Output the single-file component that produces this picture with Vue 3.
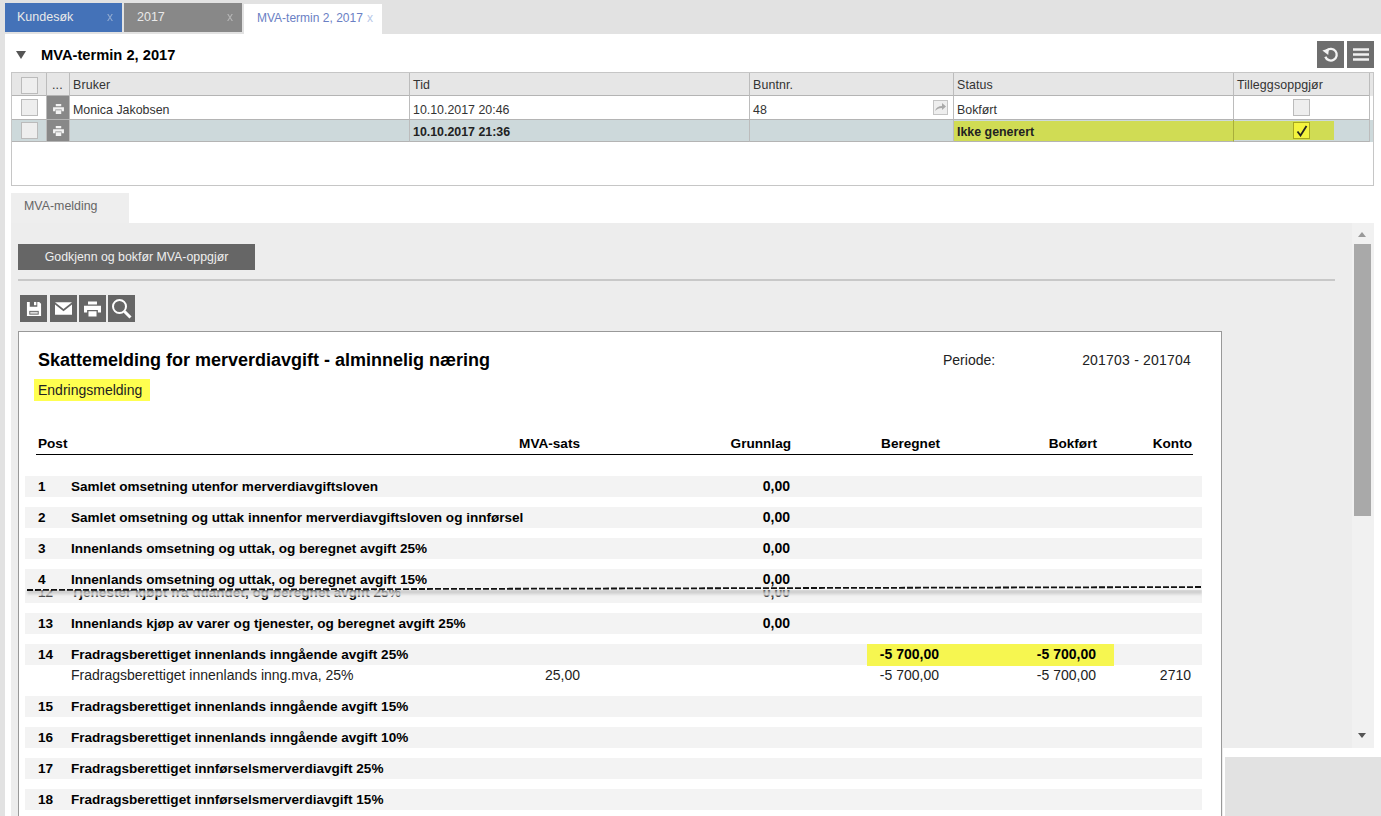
<script setup>
const tabs = [
  { label: 'Kundesøk', cls: 'blue' },
  { label: '2017', cls: 'grey' },
  { label: 'MVA-termin 2, 2017', cls: 'active' }
]
const rowsA = [
  { no: '1', name: 'Samlet omsetning utenfor merverdiavgiftsloven', base: '0,00' },
  { no: '2', name: 'Samlet omsetning og uttak innenfor merverdiavgiftsloven og innførsel', base: '0,00' },
  { no: '3', name: 'Innenlands omsetning og uttak, og beregnet avgift 25%', base: '0,00' },
  { no: '4', name: 'Innenlands omsetning og uttak, og beregnet avgift 15%', base: '0,00' }
]
const rowsC = [
  { no: '15', name: 'Fradragsberettiget innenlands inngående avgift 15%' },
  { no: '16', name: 'Fradragsberettiget innenlands inngående avgift 10%' },
  { no: '17', name: 'Fradragsberettiget innførselsmerverdiavgift 25%' },
  { no: '18', name: 'Fradragsberettiget innførselsmerverdiavgift 15%' }
]
</script>

<template>
  <div class="app">
    <div class="tabbar">
      <div v-for="t in tabs" :key="t.label" class="tab" :class="t.cls">
        <span class="tab-label">{{ t.label }}</span>
        <span class="tab-x">x</span>
      </div>
    </div>

    <div class="main">
      <div class="head">
        <span class="caret"></span>
        <h1 class="title">MVA-termin 2, 2017</h1>
        <div class="head-actions">
          <button class="icon-btn">
            <svg width="19" height="19" viewBox="0 0 21 21"><path d="M6.200 6.200A6.500 6.500 0 1 1 4.800 13" fill="none" stroke="#f4f4f4" stroke-width="2.600"/><path d="M1.500 6 8.800 3.800 8 11Z" fill="#f4f4f4"/></svg>
          </button>
          <button class="icon-btn">
            <svg width="16" height="13" viewBox="0 0 16 13"><path d="M0 1.500h16M0 6.500h16M0 11.500h16" stroke="#f0f0f0" stroke-width="2.600"/></svg>
          </button>
        </div>
      </div>

      <div class="grid-box">
        <div class="g-row g-head">
          <div class="c c1"><span class="cb"></span></div>
          <div class="c c2">...</div>
          <div class="c">Bruker</div>
          <div class="c">Tid</div>
          <div class="c">Buntnr.</div>
          <div class="c">Status</div>
          <div class="c">Tilleggsoppgjør</div>
        </div>
        <div class="g-row g-one">
          <div class="c c1"><span class="cb"></span></div>
          <div class="c c2 pr">
            <svg width="11" height="10" viewBox="0 0 12 11"><path d="M3 0h6v2.500H3zM0 3.500h12V8H9.500V6h-7v2H0zM3 7h6v4H3z" fill="#f2f2f2"/></svg>
          </div>
          <div class="c">Monica Jakobsen</div>
          <div class="c">10.10.2017 20:46</div>
          <div class="c bunt">48
            <span class="go">
              <svg width="11" height="8" viewBox="0 0 11 8"><path d="M0 8C1 4.500 3.500 3 7 3V0l4 3.500L7 7V5C4 5 2 6 0 8Z" fill="#aaa"/></svg>
            </span>
          </div>
          <div class="c">Bokført</div>
          <div class="c center"><span class="cb"></span></div>
        </div>
        <div class="g-row g-two">
          <div class="c c1"><span class="cb"></span></div>
          <div class="c c2 pr">
            <svg width="11" height="10" viewBox="0 0 12 11"><path d="M3 0h6v2.500H3zM0 3.500h12V8H9.500V6h-7v2H0zM3 7h6v4H3z" fill="#f2f2f2"/></svg>
          </div>
          <div class="c"></div>
          <div class="c">10.10.2017 21:36</div>
          <div class="c"></div>
          <div class="c st-hl">Ikke generert</div>
          <div class="c center add-hl">
            <span class="cb on">
              <svg width="12" height="12" viewBox="0 0 12 12"><path d="M1.500 6.500 4.500 10.500 10.500 1" fill="none" stroke="#222" stroke-width="1.800"/></svg>
            </span>
          </div>
        </div>
      </div>

      <div class="subtab">MVA-melding</div>

      <div class="panel">
        <button class="approve">Godkjenn og bokfør MVA-oppgjør</button>
        <div class="rule"></div>
        <div class="tools">
          <button class="tool">
            <svg width="16" height="16" viewBox="0 0 17 17"><path d="M1 1h3v5h8V1h2l2 2v13H1z" fill="#fff"/><path d="M8.500 1H11v3.500H8.500z" fill="#fff"/><path d="M3.500 10.500h10V14.500h-10z" fill="#666"/><path d="M4.500 11.500h8v2h-8z" fill="#ddd"/></svg>
          </button>
          <button class="tool mail">
            <svg width="17" height="13" viewBox="0 0 19 14"><path d="M0 0h19L9.500 7.500Z" fill="#fff"/><path d="M0 2.500V14h19V2.500L9.500 10Z" fill="#fff"/></svg>
          </button>
          <button class="tool">
            <svg width="17" height="16" viewBox="0 0 19 17"><path d="M4.500 0h10v3.500h-10zM0 5h19v7.500h-3.500V9.500h-12v3H0zM5 11h9v6H5z" fill="#fff"/></svg>
          </button>
          <button class="tool">
            <svg width="21" height="21" viewBox="0 0 21 21"><circle cx="8.500" cy="8.500" r="6.500" fill="none" stroke="#fff" stroke-width="2"/><path d="M13.500 13.500 19.500 19.500" stroke="#fff" stroke-width="3"/></svg>
          </button>
        </div>

        <div class="paper">
          <div class="paper-head">
            <h2 class="doc-title">Skattemelding for merverdiavgift - alminnelig næring</h2>
            <span class="period-l">Periode:</span>
            <span class="period-v">201703 - 201704</span>
          </div>
          <div class="change">Endringsmelding</div>

          <div class="cols colhead">
            <span>Post</span><span></span>
            <span class="r">MVA-sats</span>
            <span class="r">Grunnlag</span>
            <span class="r">Beregnet</span>
            <span class="r">Bokført</span>
            <span class="r">Konto</span>
          </div>

          <div class="rows">
            <div v-for="r in rowsA" :key="r.no" class="cols band">
              <span>{{ r.no }}</span><span class="nm">{{ r.name }}</span><span></span>
              <span class="r adj">{{ r.base }}</span>
            </div>

            <div class="tear">
              <div class="cols band torn">
                <span>12</span><span class="nm">Tjenester kjøpt fra utlandet, og beregnet avgift 25%</span><span></span>
                <span class="r adj">0,00</span>
              </div>
              <div class="tear-shadow"></div>
            </div>

            <div class="cols band">
              <span>13</span><span class="nm">Innenlands kjøp av varer og tjenester, og beregnet avgift 25%</span><span></span>
              <span class="r adj">0,00</span>
            </div>
            <div class="cols band marked">
              <span class="mark"></span>
              <span>14</span><span class="nm">Fradragsberettiget innenlands inngående avgift 25%</span><span></span><span></span>
              <span class="r adj">-5 700,00</span>
              <span class="r adj">-5 700,00</span>
            </div>
            <div class="cols detail">
              <span></span><span class="nm">Fradragsberettiget innenlands inng.mva, 25%</span>
              <span class="r">25,00</span><span></span>
              <span class="r adj">-5 700,00</span>
              <span class="r adj">-5 700,00</span>
              <span class="r adj">2710</span>
            </div>
            <div v-for="r in rowsC" :key="r.no" class="cols band after-detail">
              <span>{{ r.no }}</span><span class="nm">{{ r.name }}</span>
            </div>
          </div>

          <svg class="tear-line" width="1176" height="5" viewBox="0 0 1176 5">
            <path d="M0 4 L1176 1" stroke="#111" stroke-width="1.800" stroke-dasharray="6 2" fill="none"/>
          </svg>
        </div>

        <div class="scrollbar">
          <span class="arr up"></span>
          <span class="thumb"></span>
          <span class="arr down"></span>
        </div>
      </div>
    </div>

    <div class="corner"><div class="corner-fill"></div></div>
  </div>
</template>

<style>
html, body { margin: 0; overflow: hidden; }
</style>

<style scoped>
.app {
  position: relative;
  width: 1381px;
  height: 816px;
  overflow: hidden;
  display: flex;
  flex-direction: column;
  background: #e2e2e2;
  font-family: "Liberation Sans", Arial, sans-serif;
  font-size: 12.400px;
  color: #333;
}
.tabbar { height: 34px; flex: none; display: flex; align-items: flex-start; padding: 3px 0 0 5px; gap: 2px; box-sizing: border-box; }
.tab { height: 29px; width: 117px; box-sizing: border-box; display: flex; justify-content: space-between; align-items: center; padding: 0 9px 2px 12px; color: #e9e9e9; font-size: 12.500px; }
.tab-x { font-size: 12px; opacity: .45; color: #eee; }
.blue { background: #4472b8; }
.grey { background: #888; width: 118px; padding-left: 13px; }
.active { background: #fff; width: 138px; height: 30px; margin-top: 1px; color: #6a80c4; padding: 0 9px 3px 13px; font-size: 12px; }
.active .tab-x { color: #b8c8e8; opacity: 1; }

.main { flex: 1; min-height: 0; margin-left: 5px; background: #fff; display: flex; flex-direction: column; }
.head { height: 38px; flex: none; display: flex; align-items: center; padding: 0 7px 0 11px; box-sizing: border-box; }
.caret { width: 0; height: 0; border-left: 5.500px solid transparent; border-right: 5.500px solid transparent; border-top: 8px solid #555; margin: 3px 14px 0 0; }
.title { margin: 3px 0 0 1px; font-size: 14.700px; font-weight: 700; color: #000; flex: 1; }
.head-actions { display: flex; gap: 3px; margin-top: 3px; }
.icon-btn, .tool { padding: 0; border: 0; width: 27px; height: 27px; background: #6e6e6e; display: flex; align-items: center; justify-content: center; }

.grid-box { flex: none; margin: 0 7px 0 6px; height: 114px; box-sizing: border-box; border: 1px solid #c6c6c6; }
.g-row { display: grid; grid-template-columns: 35px 23px 340px 340px 204px 280px 136px; }
.c { box-sizing: border-box; border-right: 1px solid #bcbcbc; border-bottom: 1px solid #b4b4b4; padding-left: 3px; display: flex; align-items: center; min-width: 0; white-space: nowrap; }
.g-head { height: 23px; background: #e6e6e6; letter-spacing: .12px; }
.g-head .c { padding-top: 2px; }
.g-one { height: 24px; background: #fff; }
.g-one .c { padding-top: 4px; }
.g-two { height: 22px; background: #cdd9db; font-weight: 700; color: #222; }
.g-two .c { padding-top: 2px; }
.c1 { padding: 0 0 0 9px; }
.c2 { padding: 0 0 0 5px; }
.pr { background: #888; justify-content: center; padding: 1px 0 0 0; }
.g-one .c1, .g-two .c1 { padding-top: 0; }
.g-one .pr { padding-top: 2px; }
.g-two .pr { padding-top: 1px; }
.cb { display: flex; align-items: center; justify-content: center; box-sizing: border-box; width: 17px; height: 17px; border: 1px solid #bbb; background: #eee; }
.g-two .c.center, .g-one .c.center { justify-content: center; padding: 0; }
.g-one .center { margin-top: -1px; }
.bunt { justify-content: space-between; padding-right: 5px; }
.go { box-sizing: border-box; width: 15px; height: 15px; border: 1px solid #c4c4c4; background: #eee; display: flex; align-items: center; justify-content: center; margin-top: -5px; }
.st-hl { background: #d0dc54; border-right-color: #a8ae3a; color: #222; box-shadow: inset 0 1px 0 #cdd9db; }
.add-hl { background: linear-gradient(#d0dc54, #d0dc54) no-repeat 0 1px / 100px 19px; }
.on { background: #f4f43e; border-color: #a8a820; }

.subtab { flex: none; margin: 7px 0 0 6px; width: 118px; height: 30px; background: #eee; color: #666; box-sizing: border-box; padding: 6px 0 0 13px; }

.panel { flex: 1; min-height: 0; position: relative; margin: 0 7px 0 6px; background: #ededed; padding: 21px 0 0 7px; }
.approve { display: block; width: 237px; height: 26px; padding: 0; border: 0; background: #666; color: #eee; font: 12.350px "Liberation Sans", Arial, sans-serif; }
.rule { width: 1317px; height: 2px; background: #c8c8c8; margin-top: 9px; }
.tools { display: flex; gap: 2px; margin: 14px 0 0 2px; }
.tool { background: #666; }
.mail { margin-left: 1px; }
.paper { position: relative; width: 1204px; height: 600px; margin-top: 9px; box-sizing: border-box; background: #fff; border: 1px solid #999; color: #000; font-size: 14px; }
.paper-head { display: flex; align-items: center; width: 1172px; height: 20px; margin: 18px 0 0 19px; }
.doc-title { flex: none; margin: 0; font-size: 18px; font-weight: 700; color: #000; line-height: 20px; width: 905px; white-space: nowrap; }
.period-l { flex: none; width: 90px; font-size: 14px; color: #222; }
.period-v { flex: none; width: 153px; margin-left: 5px; font-size: 14px; letter-spacing: .2px; color: #222; text-align: right; white-space: nowrap; }
.change { width: max-content; margin: 9px 0 0 15px; height: 22px; line-height: 22px; padding: 0 8px 0 4px; background: #ffff50; color: #222; }
.cols { display: grid; grid-template-columns: 33px 440px 69px 211px 149px 157px 95px; align-items: center; }
.r { text-align: right; white-space: nowrap; }
.adj { padding-right: 1px; }
.colhead { height: 22px; box-sizing: border-box; margin: 32px 0 0 17px; width: 1157px; padding: 0 1px 1px 2px; border-bottom: 1px solid #000; font-weight: 700; font-size: 13.600px; }
.rows { padding: 11px 0 0 6px; width: 1183px; box-sizing: border-box; }
.band { margin-top: 10px; height: 21px; background: #f3f3f3; padding-left: 13px; font-weight: 700; font-size: 13.550px; position: relative; }
.band > span { position: relative; }
.band .r.adj { font-size: 14px; padding-bottom: 2px; }
.nm { white-space: nowrap; }
.tear { position: relative; height: 13px; overflow: hidden; }
.torn { margin-top: -8px; }
.tear-shadow { position: absolute; left: 2px; right: 0; top: -2px; height: 8px; background: linear-gradient(#fff0, #bbbbbbcc 45%, #f3f3f3); filter: blur(1px); }
.marked .mark { position: absolute; left: 842px; top: 0; width: 247px; height: 22px; background: #f6f650; }
.detail { height: 31px; padding: 0 0 12px 13px; box-sizing: border-box; color: #222; margin-top: 0; }
.detail + .after-detail { margin-top: 0; }
.tear-line { position: absolute; left: 8px; top: 254px; }

.scrollbar { position: absolute; right: 0; top: 0; width: 22px; height: 525px; background: #f1f1f1; }
.thumb { position: absolute; left: 2px; top: 21px; width: 17px; height: 272px; background: #a9a9a9; }
.arr { position: absolute; left: 6px; width: 0; height: 0; border-left: 4.500px solid transparent; border-right: 4.500px solid transparent; }
.up { top: 9px; border-bottom: 5px solid #999; }
.down { top: 510px; border-top: 5px solid #555; }

.corner { position: absolute; left: 1223px; top: 748px; width: 158px; height: 68px; background: #fff; }
.corner-fill { margin: 9px 0 0 2px; height: 59px; background: #e2e2e2; }
</style>
